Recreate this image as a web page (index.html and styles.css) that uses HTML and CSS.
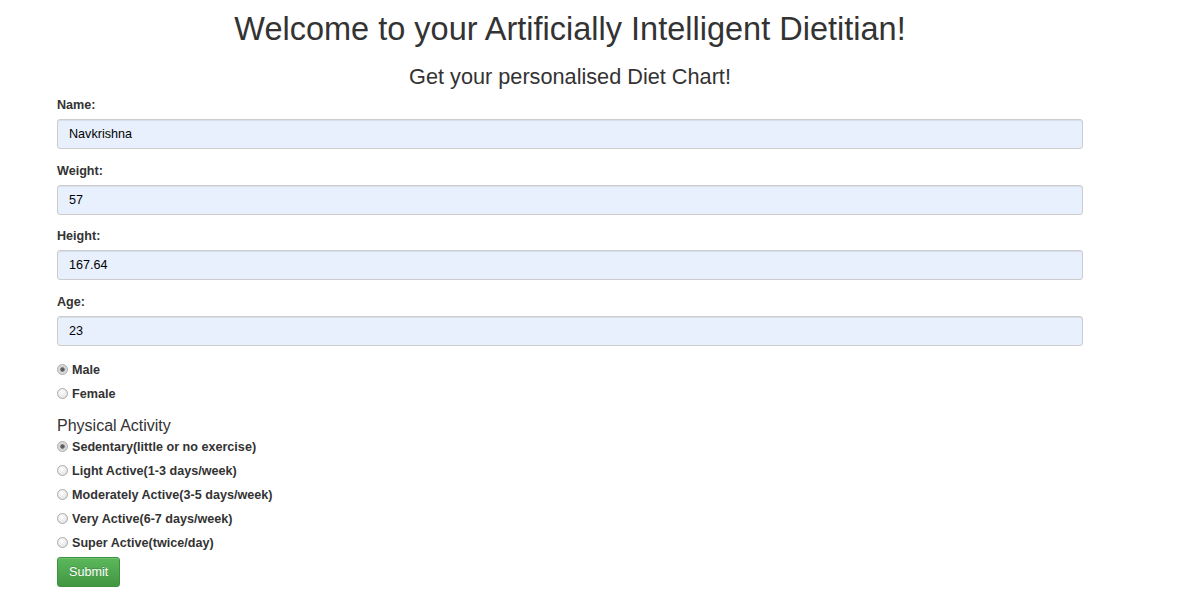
FILE: index.html
```html
<!DOCTYPE html>
<html>
<head>
<meta charset="utf-8">
<link rel="stylesheet" href="styles.css">
</head>
<body>
<div class="page">
  <h1 class="title">Welcome to your Artificially Intelligent Dietitian!</h1>
  <h2 class="subtitle">Get your personalised Diet Chart!</h2>
  <form class="form">
    <div class="group">
      <label class="label">Name:</label>
      <input class="field" type="text" value="Navkrishna">
    </div>
    <div class="group">
      <label class="label">Weight:</label>
      <input class="field" type="text" value="57">
    </div>
    <div class="group">
      <label class="label">Height:</label>
      <input class="field" type="text" value="167.64">
    </div>
    <div class="group">
      <label class="label">Age:</label>
      <input class="field" type="text" value="23">
    </div>
    <div class="radios gender">
      <label class="radio"><input type="radio" name="g" checked><span>Male</span></label>
      <label class="radio"><input type="radio" name="g"><span>Female</span></label>
    </div>
    <div class="section">Physical Activity</div>
    <div class="radios">
      <label class="radio"><input type="radio" name="a" checked><span>Sedentary(little or no exercise)</span></label>
      <label class="radio"><input type="radio" name="a"><span>Light Active(1-3 days/week)</span></label>
      <label class="radio"><input type="radio" name="a"><span>Moderately Active(3-5 days/week)</span></label>
      <label class="radio"><input type="radio" name="a"><span>Very Active(6-7 days/week)</span></label>
      <label class="radio"><input type="radio" name="a"><span>Super Active(twice/day)</span></label>
    </div>
    <button class="submit" type="button">Submit</button>
  </form>
</div>
</body>
</html>
```
FILE: styles.css
```css
html, body {
  margin: 0;
  padding: 0;
  background: #fff;
}
body {
  font-family: "Liberation Sans", Arial, sans-serif;
  color: #333;
  font-size: 12.6px;
}
.page {
  width: 1026px;
  margin-left: 57px;
  display: flex;
  flex-direction: column;
}
.title {
  margin: 10px 0 0;
  font-size: 32.5px;
  font-weight: normal;
  line-height: 38px;
  text-align: center;
  color: #333;
}
.subtitle {
  margin: 15px 0 0;
  font-size: 21.7px;
  font-weight: normal;
  line-height: 28px;
  text-align: center;
  color: #333;
}
.form {
  display: flex;
  flex-direction: column;
  margin-top: 6px;
}
.group {
  display: flex;
  flex-direction: column;
  margin-bottom: 13.67px;
}
.label {
  font-weight: bold;
  font-size: 12.6px;
  line-height: 17px;
  margin-bottom: 5px;
}
.field {
  box-sizing: border-box;
  height: 30px;
  width: 100%;
  padding: 5px 11px;
  font-family: "Liberation Sans", Arial, sans-serif;
  font-size: 12.6px;
  color: #000;
  background: #e8f0fe;
  border: 1px solid #ccc;
  border-radius: 3px;
  box-shadow: inset 0 1px 1px rgba(0,0,0,.075);
  outline: none;
}
.radios {
  display: flex;
  flex-direction: column;
}
.gender {
  margin-top: -2px;
}
.radio {
  display: flex;
  align-items: center;
  height: 24px;
  font-weight: bold;
  font-size: 12.6px;
  color: #333;
}
.radio input {
  appearance: none;
  -webkit-appearance: none;
  box-sizing: border-box;
  width: 11px;
  height: 11px;
  margin: 0 4px 0 0;
  border: 1px solid #a9a9a9;
  border-radius: 50%;
  background: radial-gradient(circle at 40% 35%, #fdfdfd 0, #e6e6e6 70%, #d8d8d8 100%);
}
.radio input:checked {
  background: radial-gradient(circle, #555 0, #666 1.8px, #d0d0d0 2.6px, #efefef 100%);
}
.section {
  font-size: 16px;
  line-height: 19px;
  margin-top: 10px;
  color: #333;
}
.submit {
  align-self: flex-start;
  margin-top: 2px;
  height: 30px;
  padding: 0 11px;
  font-family: "Liberation Sans", Arial, sans-serif;
  font-size: 12.6px;
  color: #fff;
  background: linear-gradient(#5cb85c, #419641);
  border: 1px solid #3e8f3e;
  border-radius: 3px;
  text-shadow: 0 -1px 0 rgba(0,0,0,.2);
  box-shadow: inset 0 1px 0 rgba(255,255,255,.15), 0 1px 1px rgba(0,0,0,.075);
}
```
